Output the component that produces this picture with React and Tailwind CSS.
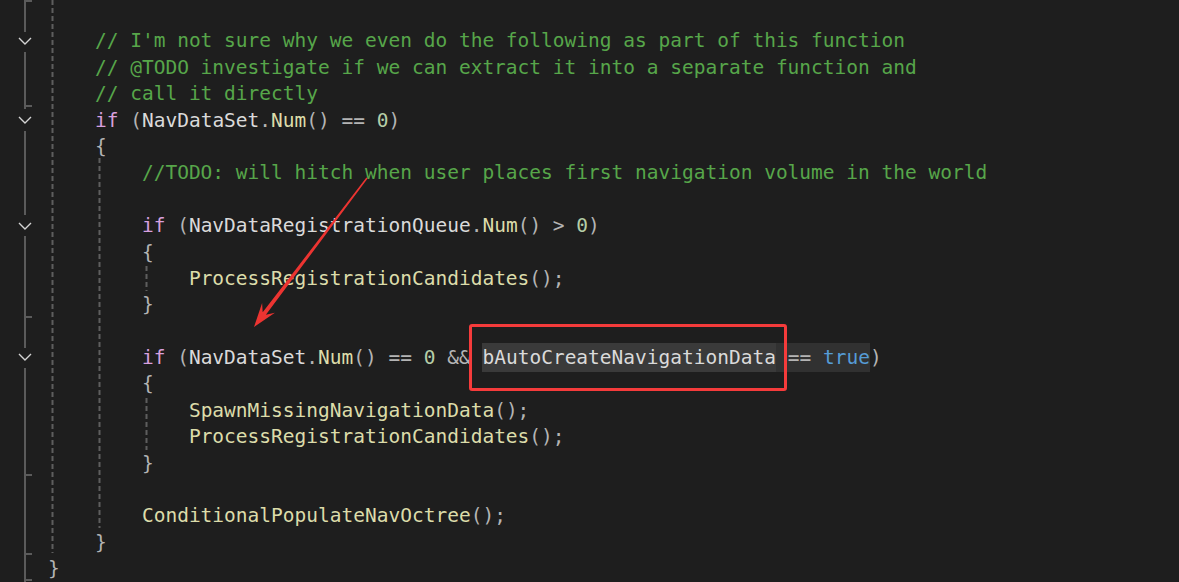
import React from "react";

// token colours (VS dark)
const cm = "text-[#57a64a]";
const kw = "text-[#d8a0df]";
const id = "text-[#dadada]";
const fn = "text-[#dcdcaa]";
const num = "text-[#b5cea8]";
const op = "text-[#b4b4b4]";
const bool = "text-[#569cd6]";

const lines = [
  [],
  [["    // I'm not sure why we even do the following as part of this function", cm]],
  [["    // @TODO investigate if we can extract it into a separate function and", cm]],
  [["    // call it directly", cm]],
  [["    ", op], ["if", kw], [" (", op], ["NavDataSet", id], [".", op], ["Num", fn], ["() == ", op], ["0", num], [")", op]],
  [["    {", op]],
  [["        //TODO: will hitch when user places first navigation volume in the world", cm]],
  [],
  [["        ", op], ["if", kw], [" (", op], ["NavDataRegistrationQueue", id], [".", op], ["Num", fn], ["() > ", op], ["0", num], [")", op]],
  [["        {", op]],
  [["            ", op], ["ProcessRegistrationCandidates", fn], ["();", op]],
  [["        }", op]],
  [],
  [
    ["        ", op], ["if", kw], [" (", op], ["NavDataSet", id], [".", op], ["Num", fn], ["() == ", op], ["0", num], [" && ", op],
    ["bAutoCreateNavigationData", id, "bg-[#3a3a3a] py-[3px]"], [" == ", op, "bg-[#313131] py-[3px]"], ["true", bool, "bg-[#313131] py-[3px]"], [")", op],
  ],
  [["        {", op]],
  [["            ", op], ["SpawnMissingNavigationData", fn], ["();", op]],
  [["            ", op], ["ProcessRegistrationCandidates", fn], ["();", op]],
  [["        }", op]],
  [],
  [["        ", op], ["ConditionalPopulateNavOctree", fn], ["();", op]],
  [["    }", op]],
  [["}", op]],
];

const Gutter = () => {
  const line = "#5b5b5b";
  const segs = [[0, 32], [52, 109], [131, 215], [236, 348], [368, 582]];
  const ticks = [0, 105, 316, 474, 553, 579];
  const chev = [41, 120, 226, 357];
  return (
    <svg width="48" height="582" className="shrink-0">
      {segs.map(([a, b]) => (
        <rect key={a} x="24" y={a} width="2" height={b - a} fill={line} />
      ))}
      {ticks.map((t) => (
        <rect key={t} x="24" y={t} width="8" height="2" fill={line} />
      ))}
      {chev.map((c) => (
        <path key={c} d={`M19 ${c - 3} L25 ${c + 3} L31 ${c - 3}`} fill="none" stroke="#d4d4d4" strokeWidth="1.4" />
      ))}
    </svg>
  );
};

const Guides = () => {
  const g = [
    [52.5, 0, 553],
    [99.5, 158, 528],
    [146.5, 266, 291],
    [146.5, 398, 450],
  ];
  return (
    <svg width="1179" height="582" className="absolute left-0 top-0 pointer-events-none">
      {g.map(([x, a, b], i) => (
        <line key={i} x1={x} x2={x} y1={a} y2={b} stroke="#5e5e5e" strokeWidth="2" strokeDasharray="5 3" />
      ))}
      {/* arrow annotation */}
      <polygon
        points="367.6,178.4 265.9,314.7 274.9,312.7 254,327 262.1,303.1 262.7,312.3 366.4,177.6"
        fill="#ec3431"
      />
    </svg>
  );
};

export default function App() {
  return (
    <div className="relative w-[1179px] h-[582px] overflow-hidden bg-[#1e1e1e] flex">
      <Gutter />
      <div className="flex-1 pt-[2px] font-['DejaVu_Sans_Mono','Liberation_Mono',monospace] text-[19.5px]">
        {lines.map((toks, i) => (
          <div key={i} className="relative h-[26.4px] leading-[26.4px] whitespace-pre">
            {toks.map(([t, c, bg], j) => (
              <span key={j} className={bg ? `${c} ${bg}` : c}>
                {t}
              </span>
            ))}
            {i === 13 && (
              <div className="absolute left-[421px] top-[-21px] w-[318px] h-[67px] border-[3px] border-[#f53b3b] rounded-[3px]" />
            )}
          </div>
        ))}
      </div>
      <Guides />
    </div>
  );
}
